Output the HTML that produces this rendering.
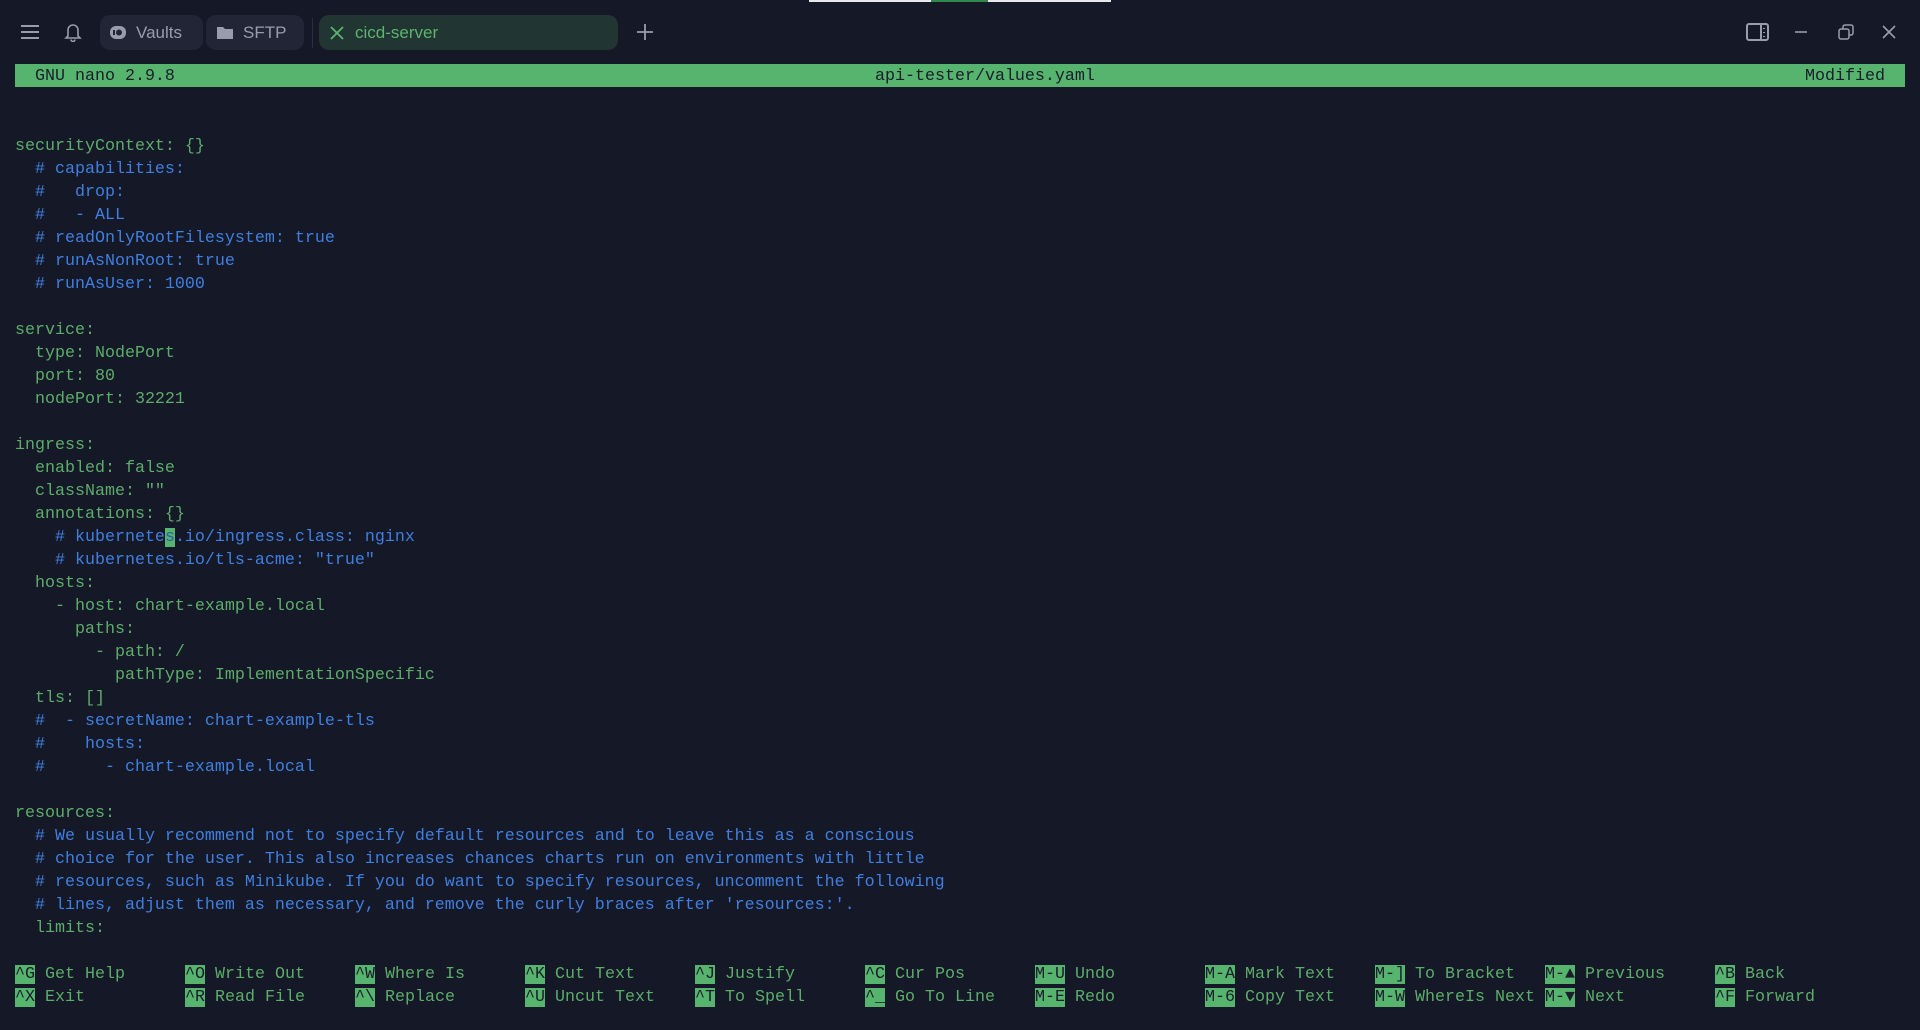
<!DOCTYPE html>
<html><head><meta charset="utf-8"><style>
body{margin:0;width:1920px;height:1030px;background:#151827;overflow:hidden;position:relative;font-family:"Liberation Sans",sans-serif}
.tab{position:absolute;top:15px;height:35px;border-radius:10px;background:#222536;color:#9a9cab;font-size:17px;display:flex;align-items:center}
.t{position:absolute;left:15px;top:66px;font-family:"Liberation Mono",monospace;font-size:16.67px;line-height:23px;white-space:pre;color:#5cad6a}
.b{color:#3f7fe0}
.bar{position:absolute;left:15px;top:64px;width:1890px;height:23px;background:#57b46f;color:#1a1d2a;font-family:"Liberation Mono",monospace;font-size:16.67px;line-height:25px;white-space:pre}
.sc{position:absolute;font-family:"Liberation Mono",monospace;font-size:16.67px;line-height:23px;white-space:pre;color:#5cad6a}
.k{background:#57b46f;color:#1a1d2a}
</style></head><body>
<div style="position:absolute;left:809px;top:0;width:302px;height:2px;background:#e8e8ee"></div>
<div style="position:absolute;left:931px;top:0;width:57px;height:2px;background:#2f8a4a"></div>
<svg style="position:absolute;left:20px;top:23px" width="20" height="18" stroke="#9a9cab" stroke-width="2"><path d="M1 3h18M1 9h18M1 15h18"/></svg>
<svg style="position:absolute;left:64px;top:22px" width="18" height="20" fill="none" stroke="#9a9cab" stroke-width="1.6"><path d="M4 14V8a5 5 0 0 1 10 0v6l2 2H2z M7 17.5a2 2 0 0 0 4 0"/></svg>
<div class="tab" style="left:100px;width:103px"><svg style="margin-left:9px" width="18" height="18"><rect x="1" y="2" width="16" height="13" rx="6" fill="#9a9cab"/><circle cx="10" cy="8.5" r="3" fill="#222536"/><rect x="4" y="6" width="2" height="5" fill="#222536"/></svg><span style="margin-left:9px">Vaults</span></div>
<div class="tab" style="left:206px;width:98px"><svg style="margin-left:10px" width="18" height="16"><path d="M1 2h6l2 2h8v10H1z" fill="#9a9cab"/></svg><span style="margin-left:9px">SFTP</span></div>
<div style="position:absolute;left:312px;top:18px;width:1px;height:30px;background:#2c2f40"></div>
<div class="tab" style="left:319px;width:299px;background:#213533;color:#5cb46d"><svg style="margin-left:10px" width="16" height="16" stroke="#5cb46d" stroke-width="1.8"><path d="M2 2l12 12M14 2L2 14"/></svg><span style="margin-left:10px">cicd-server</span></div>
<svg style="position:absolute;left:636px;top:23px" width="18" height="18" stroke="#9a9cab" stroke-width="1.8"><path d="M9 1v16M1 9h16"/></svg>
<svg style="position:absolute;left:1746px;top:23px" width="24" height="19" fill="none" stroke="#9a9cab" stroke-width="2"><rect x="1" y="1" width="21" height="16" rx="2"/><path d="M15 1v16"/><path d="M18 5v1M18 9v1M18 13v1" stroke-width="2"/></svg>
<svg style="position:absolute;left:1794px;top:24px" width="14" height="14" stroke="#9a9cab" stroke-width="1.6"><path d="M1 8h12"/></svg>
<svg style="position:absolute;left:1838px;top:24px" width="16" height="16" fill="none" stroke="#9a9cab" stroke-width="1.5"><rect x="1" y="5" width="10" height="10" rx="2"/><path d="M5 5V3a2 2 0 0 1 2-2h6a2 2 0 0 1 2 2v6a2 2 0 0 1-2 2h-2"/></svg>
<svg style="position:absolute;left:1882px;top:25px" width="14" height="14" stroke="#9a9cab" stroke-width="1.6"><path d="M1 1l12 12M13 1L1 13"/></svg>
<div class="bar">  GNU nano 2.9.8<span style="position:absolute;left:860px">api-tester/values.yaml</span><span style="position:absolute;left:1790px">Modified</span></div>
<div class="t">


securityContext: {}
<span class="b">  # capabilities:</span>
<span class="b">  #   drop:</span>
<span class="b">  #   - ALL</span>
<span class="b">  # readOnlyRootFilesystem: true</span>
<span class="b">  # runAsNonRoot: true</span>
<span class="b">  # runAsUser: 1000</span>

service:
  type: NodePort
  port: 80
  nodePort: 32221

ingress:
  enabled: false
  className: ""
  annotations: {}
<span class="b">    # kubernete<span style="background:#57b46f;color:#2a5fb0">s</span>.io/ingress.class: nginx</span>
<span class="b">    # kubernetes.io/tls-acme: "true"</span>
  hosts:
    - host: chart-example.local
      paths:
        - path: /
          pathType: ImplementationSpecific
  tls: []
<span class="b">  #  - secretName: chart-example-tls</span>
<span class="b">  #    hosts:</span>
<span class="b">  #      - chart-example.local</span>

resources:
<span class="b">  # We usually recommend not to specify default resources and to leave this as a conscious</span>
<span class="b">  # choice for the user. This also increases chances charts run on environments with little</span>
<span class="b">  # resources, such as Minikube. If you do want to specify resources, uncomment the following</span>
<span class="b">  # lines, adjust them as necessary, and remove the curly braces after 'resources:'.</span>
  limits:</div>
<div class="sc" style="left:15px;top:963px"><span class="k">^G</span> Get Help
<span class="k">^X</span> Exit</div>
<div class="sc" style="left:185px;top:963px"><span class="k">^O</span> Write Out
<span class="k">^R</span> Read File</div>
<div class="sc" style="left:355px;top:963px"><span class="k">^W</span> Where Is
<span class="k">^\</span> Replace</div>
<div class="sc" style="left:525px;top:963px"><span class="k">^K</span> Cut Text
<span class="k">^U</span> Uncut Text</div>
<div class="sc" style="left:695px;top:963px"><span class="k">^J</span> Justify
<span class="k">^T</span> To Spell</div>
<div class="sc" style="left:865px;top:963px"><span class="k">^C</span> Cur Pos
<span class="k">^_</span> Go To Line</div>
<div class="sc" style="left:1035px;top:963px"><span class="k">M-U</span> Undo
<span class="k">M-E</span> Redo</div>
<div class="sc" style="left:1205px;top:963px"><span class="k">M-A</span> Mark Text
<span class="k">M-6</span> Copy Text</div>
<div class="sc" style="left:1375px;top:963px"><span class="k">M-]</span> To Bracket
<span class="k">M-W</span> WhereIs Next</div>
<div class="sc" style="left:1545px;top:963px"><span class="k">M-▲</span> Previous
<span class="k">M-▼</span> Next</div>
<div class="sc" style="left:1715px;top:963px"><span class="k">^B</span> Back
<span class="k">^F</span> Forward</div>
</body></html>
